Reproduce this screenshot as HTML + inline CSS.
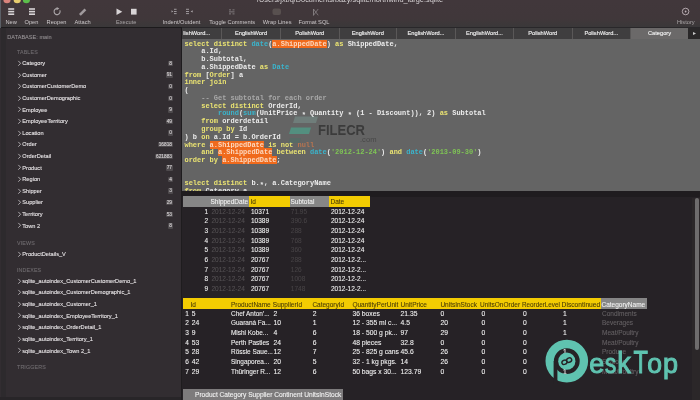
<!DOCTYPE html><html><head><meta charset="utf-8"><style>
*{margin:0;padding:0;box-sizing:border-box}
html,body{width:700px;height:400px;overflow:hidden;background:#262226;font-family:"Liberation Sans",sans-serif}
.a{position:absolute;white-space:nowrap}
#tb{left:0;top:0;width:700px;height:27px;background:linear-gradient(#41373b 0,#40373a 70%,#3a3839 100%)}
#tbb{left:0;top:26.6px;width:700px;height:1.2px;background:linear-gradient(90deg,#1c1a1c 0,#1c1a1c 182px,#29272a 182px)}
#sb{left:0;top:28px;width:182px;height:372px;background:#322d31}
#vb{left:181px;top:28px;width:1.4px;height:372px;background:#1e1c1e}
#tabs{left:182.3px;top:28px;width:517.7px;height:11px;background:#3f3e3f}
#ed{left:182.3px;top:39px;width:517.7px;height:152px;background:#646464;overflow:hidden}
#res{left:182.3px;top:191px;width:517.7px;height:209px;background:#262226;overflow:hidden}
.tl{font-size:5.7px;color:#cdc9cb;line-height:7px;text-align:center}
.si{font-size:5.65px;color:#e6e3e5;line-height:8px;-webkit-text-stroke:0.1px #e6e3e5}
.sh{font-size:5.3px;color:#6f6b6f;line-height:7px;letter-spacing:0.15px;-webkit-text-stroke:0.1px #6f6b6f}
.code{font-family:"Liberation Mono",monospace;font-weight:bold;font-size:6.97px;line-height:7.76px;color:#ececec;white-space:pre}
.k{color:#ebe472}
.f{color:#3ab4cc}
.s{color:#7fc455}
.c{color:#a8a8a8}
.h{background:#f06a1c;color:#fcd8bf}
.n{color:#b87450}
.tab{font-size:5.7px;color:#ececec;-webkit-text-stroke:0.15px #ececec;line-height:11px;text-align:center;top:0;height:11px;border-left:1px solid #5a5858}
.g{font-size:6.5px;line-height:9.7px;color:#f2f2f2}
</style></head><body><div id="W" style="position:absolute;left:0;top:0;width:700px;height:400px;will-change:transform">
<div class="a" id="tb"></div><div class="a" id="tbb"></div>
<svg class="a" style="left:0;top:0" width="700" height="27"><circle cx="7" cy="-0.3" r="3.6" fill="#d9837c"/><circle cx="17.2" cy="-0.3" r="3.6" fill="#e6cc6e"/><circle cx="26.4" cy="-0.3" r="3.6" fill="#5cbf4c"/><g fill="#d8d4d6"><rect x="8.2" y="8.2" width="6" height="1.6"/><rect x="8.2" y="10.8" width="6" height="1.6"/><rect x="8.2" y="13.4" width="6" height="1.6"/></g><g fill="#d8d4d6"><rect x="29" y="8.2" width="6" height="1.6"/><rect x="29" y="10.8" width="6" height="1.6"/><rect x="29" y="13.4" width="6" height="1.6"/></g><path d="M57 8.6 A3 3 0 1 0 59.8 10.3" fill="none" stroke="#a9a4a7" stroke-width="1.1"/><path d="M56.6 7 L59.4 8.6 L56.6 10.2 Z" fill="#a9a4a7"/><path d="M79 14 L84.5 8.5 L86.3 10.3 L80.8 15.8 Z" fill="#a09a9d"/><path d="M116.5 8.6 L122.3 11.8 L116.5 15 Z" fill="#d8d4d6"/><rect x="131" y="8.8" width="5.6" height="5.8" fill="#d8d4d6"/><g fill="#a9a4a7"><path d="M171.5 10.2 L173.3 11.4 L171.5 12.6Z"/><rect x="174" y="8.8" width="2.6" height="0.9"/><rect x="174" y="11" width="2.6" height="0.9"/><rect x="174" y="13.2" width="2.6" height="0.9"/><rect x="186" y="8.8" width="3" height="0.9"/><rect x="186" y="11" width="3" height="0.9"/><rect x="186" y="13.2" width="3" height="0.9"/><path d="M192.7 10.2 L190.6 11.4 L192.7 12.6Z"/></g><g fill="#8f8a8d"><rect x="229" y="9.5" width="2" height="0.8"/><rect x="232.5" y="9.5" width="2" height="0.8"/><rect x="229" y="11.5" width="5.5" height="0.8"/><rect x="229" y="13.5" width="2" height="0.8"/><rect x="232.5" y="13.5" width="2" height="0.8"/></g><rect x="272.5" y="8.5" width="8.5" height="6.5" rx="2" fill="#58504f" /><path d="M313.5 9 L318.2 15.3 M318.2 9 L313.5 15.3" stroke="#8f8a8d" stroke-width="0.7"/><rect x="313" y="9" width="0.8" height="6.5" fill="#8f8a8d"/><circle cx="685.6" cy="11.5" r="3.3" fill="none" stroke="#bfb3b9" stroke-width="0.9"/><circle cx="685.6" cy="11.5" r="0.9" fill="#bfb3b9"/></svg>
<div class="a" style="left:0;top:0;width:1px;height:400px;background:#5b5f66"></div>
<div class="a tl" style="left:11.2px;top:19px;width:80px;margin-left:-40px;">New</div>
<div class="a tl" style="left:31.5px;top:19px;width:80px;margin-left:-40px;">Open</div>
<div class="a tl" style="left:56.5px;top:19px;width:80px;margin-left:-40px;">Reopen</div>
<div class="a tl" style="left:82.6px;top:19px;width:80px;margin-left:-40px;">Attach</div>
<div class="a tl" style="left:126.2px;top:19px;width:80px;margin-left:-40px;color:#aaa6a8">Execute</div>
<div class="a tl" style="left:181.5px;top:19px;width:80px;margin-left:-40px;">Indent/Outdent</div>
<div class="a tl" style="left:232.2px;top:19px;width:80px;margin-left:-40px;">Toggle Comments</div>
<div class="a tl" style="left:277.2px;top:19px;width:80px;margin-left:-40px;">Wrap Lines</div>
<div class="a tl" style="left:314.0px;top:19px;width:80px;margin-left:-40px;">Format SQL</div>
<div class="a tl" style="left:685.8px;top:19px;width:80px;margin-left:-40px;color:#aaa6a8">History</div>
<div class="a" style="left:257px;top:-3.7px;font-size:7.35px;line-height:8px;color:#d8d4d6">/Users/jxbq/Documents/bazy/sqlite/northwind_large.sqlite</div>
<div class="a" id="sb"></div><div class="a" id="vb"></div>
<div class="a" style="left:1px;top:28px;width:5px;height:372px;background:#2d2a2d"></div>
<div class="a" style="left:0;top:397px;width:181px;height:3px;background:#282528"></div>
<div class="a sh" style="left:7.3px;top:33.6px;font-size:5.6px;letter-spacing:0;color:#a29ea0">DATABASE: main</div>
<div class="a sh" style="left:17px;top:49.2px">TABLES</div>
<svg class="a" style="left:17px;top:59.90px" width="5" height="7"><path d="M1.3 0.9 L3.6 3.3 L1.3 5.7" fill="none" stroke="#d6d2d4" stroke-width="0.75"/></svg>
<div class="a si" style="left:22.3px;top:59.20px">Category</div>
<div class="a" style="right:527px;top:60.70px;height:5.6px;padding:0 1px;background:#4e4a4d;border-radius:1px;font-size:4.8px;line-height:5.6px;color:#cdc9cb;-webkit-text-stroke:0.15px #cdc9cb">8</div>
<svg class="a" style="left:17px;top:71.50px" width="5" height="7"><path d="M1.3 0.9 L3.6 3.3 L1.3 5.7" fill="none" stroke="#d6d2d4" stroke-width="0.75"/></svg>
<div class="a si" style="left:22.3px;top:70.80px">Customer</div>
<div class="a" style="right:527px;top:72.30px;height:5.6px;padding:0 1px;background:#4e4a4d;border-radius:1px;font-size:4.8px;line-height:5.6px;color:#cdc9cb;-webkit-text-stroke:0.15px #cdc9cb">91</div>
<svg class="a" style="left:17px;top:83.10px" width="5" height="7"><path d="M1.3 0.9 L3.6 3.3 L1.3 5.7" fill="none" stroke="#d6d2d4" stroke-width="0.75"/></svg>
<div class="a si" style="left:22.3px;top:82.40px">CustomerCustomerDemo</div>
<div class="a" style="right:527px;top:83.90px;height:5.6px;padding:0 1px;background:#4e4a4d;border-radius:1px;font-size:4.8px;line-height:5.6px;color:#cdc9cb;-webkit-text-stroke:0.15px #cdc9cb">0</div>
<svg class="a" style="left:17px;top:94.70px" width="5" height="7"><path d="M1.3 0.9 L3.6 3.3 L1.3 5.7" fill="none" stroke="#d6d2d4" stroke-width="0.75"/></svg>
<div class="a si" style="left:22.3px;top:94.00px">CustomerDemographic</div>
<div class="a" style="right:527px;top:95.50px;height:5.6px;padding:0 1px;background:#4e4a4d;border-radius:1px;font-size:4.8px;line-height:5.6px;color:#cdc9cb;-webkit-text-stroke:0.15px #cdc9cb">0</div>
<svg class="a" style="left:17px;top:106.30px" width="5" height="7"><path d="M1.3 0.9 L3.6 3.3 L1.3 5.7" fill="none" stroke="#d6d2d4" stroke-width="0.75"/></svg>
<div class="a si" style="left:22.3px;top:105.60px">Employee</div>
<div class="a" style="right:527px;top:107.10px;height:5.6px;padding:0 1px;background:#4e4a4d;border-radius:1px;font-size:4.8px;line-height:5.6px;color:#cdc9cb;-webkit-text-stroke:0.15px #cdc9cb">9</div>
<svg class="a" style="left:17px;top:117.90px" width="5" height="7"><path d="M1.3 0.9 L3.6 3.3 L1.3 5.7" fill="none" stroke="#d6d2d4" stroke-width="0.75"/></svg>
<div class="a si" style="left:22.3px;top:117.20px">EmployeeTerritory</div>
<div class="a" style="right:527px;top:118.70px;height:5.6px;padding:0 1px;background:#4e4a4d;border-radius:1px;font-size:4.8px;line-height:5.6px;color:#cdc9cb;-webkit-text-stroke:0.15px #cdc9cb">49</div>
<svg class="a" style="left:17px;top:129.50px" width="5" height="7"><path d="M1.3 0.9 L3.6 3.3 L1.3 5.7" fill="none" stroke="#d6d2d4" stroke-width="0.75"/></svg>
<div class="a si" style="left:22.3px;top:128.80px">Location</div>
<div class="a" style="right:527px;top:130.30px;height:5.6px;padding:0 1px;background:#4e4a4d;border-radius:1px;font-size:4.8px;line-height:5.6px;color:#cdc9cb;-webkit-text-stroke:0.15px #cdc9cb">0</div>
<svg class="a" style="left:17px;top:141.10px" width="5" height="7"><path d="M1.3 0.9 L3.6 3.3 L1.3 5.7" fill="none" stroke="#d6d2d4" stroke-width="0.75"/></svg>
<div class="a si" style="left:22.3px;top:140.40px">Order</div>
<div class="a" style="right:527px;top:141.90px;height:5.6px;padding:0 1px;background:#4e4a4d;border-radius:1px;font-size:4.8px;line-height:5.6px;color:#cdc9cb;-webkit-text-stroke:0.15px #cdc9cb">16818</div>
<svg class="a" style="left:17px;top:152.70px" width="5" height="7"><path d="M1.3 0.9 L3.6 3.3 L1.3 5.7" fill="none" stroke="#d6d2d4" stroke-width="0.75"/></svg>
<div class="a si" style="left:22.3px;top:152.00px">OrderDetail</div>
<div class="a" style="right:527px;top:153.50px;height:5.6px;padding:0 1px;background:#4e4a4d;border-radius:1px;font-size:4.8px;line-height:5.6px;color:#cdc9cb;-webkit-text-stroke:0.15px #cdc9cb">621883</div>
<svg class="a" style="left:17px;top:164.30px" width="5" height="7"><path d="M1.3 0.9 L3.6 3.3 L1.3 5.7" fill="none" stroke="#d6d2d4" stroke-width="0.75"/></svg>
<div class="a si" style="left:22.3px;top:163.60px">Product</div>
<div class="a" style="right:527px;top:165.10px;height:5.6px;padding:0 1px;background:#4e4a4d;border-radius:1px;font-size:4.8px;line-height:5.6px;color:#cdc9cb;-webkit-text-stroke:0.15px #cdc9cb">77</div>
<svg class="a" style="left:17px;top:175.90px" width="5" height="7"><path d="M1.3 0.9 L3.6 3.3 L1.3 5.7" fill="none" stroke="#d6d2d4" stroke-width="0.75"/></svg>
<div class="a si" style="left:22.3px;top:175.20px">Region</div>
<div class="a" style="right:527px;top:176.70px;height:5.6px;padding:0 1px;background:#4e4a4d;border-radius:1px;font-size:4.8px;line-height:5.6px;color:#cdc9cb;-webkit-text-stroke:0.15px #cdc9cb">4</div>
<svg class="a" style="left:17px;top:187.50px" width="5" height="7"><path d="M1.3 0.9 L3.6 3.3 L1.3 5.7" fill="none" stroke="#d6d2d4" stroke-width="0.75"/></svg>
<div class="a si" style="left:22.3px;top:186.80px">Shipper</div>
<div class="a" style="right:527px;top:188.30px;height:5.6px;padding:0 1px;background:#4e4a4d;border-radius:1px;font-size:4.8px;line-height:5.6px;color:#cdc9cb;-webkit-text-stroke:0.15px #cdc9cb">3</div>
<svg class="a" style="left:17px;top:199.10px" width="5" height="7"><path d="M1.3 0.9 L3.6 3.3 L1.3 5.7" fill="none" stroke="#d6d2d4" stroke-width="0.75"/></svg>
<div class="a si" style="left:22.3px;top:198.40px">Supplier</div>
<div class="a" style="right:527px;top:199.90px;height:5.6px;padding:0 1px;background:#4e4a4d;border-radius:1px;font-size:4.8px;line-height:5.6px;color:#cdc9cb;-webkit-text-stroke:0.15px #cdc9cb">29</div>
<svg class="a" style="left:17px;top:210.70px" width="5" height="7"><path d="M1.3 0.9 L3.6 3.3 L1.3 5.7" fill="none" stroke="#d6d2d4" stroke-width="0.75"/></svg>
<div class="a si" style="left:22.3px;top:210.00px">Territory</div>
<div class="a" style="right:527px;top:211.50px;height:5.6px;padding:0 1px;background:#4e4a4d;border-radius:1px;font-size:4.8px;line-height:5.6px;color:#cdc9cb;-webkit-text-stroke:0.15px #cdc9cb">53</div>
<svg class="a" style="left:17px;top:222.30px" width="5" height="7"><path d="M1.3 0.9 L3.6 3.3 L1.3 5.7" fill="none" stroke="#d6d2d4" stroke-width="0.75"/></svg>
<div class="a si" style="left:22.3px;top:221.60px">Town 2</div>
<div class="a" style="right:527px;top:223.10px;height:5.6px;padding:0 1px;background:#4e4a4d;border-radius:1px;font-size:4.8px;line-height:5.6px;color:#cdc9cb;-webkit-text-stroke:0.15px #cdc9cb">8</div>
<div class="a sh" style="left:17px;top:239.5px">VIEWS</div>
<svg class="a" style="left:17px;top:250.50px" width="5" height="7"><path d="M1.3 0.9 L3.6 3.3 L1.3 5.7" fill="none" stroke="#d6d2d4" stroke-width="0.75"/></svg>
<div class="a si" style="left:22.3px;top:249.80px">ProductDetails_V</div>
<div class="a sh" style="left:17px;top:266.5px">INDEXES</div>
<svg class="a" style="left:17px;top:277.50px" width="5" height="7"><path d="M1.3 0.9 L3.6 3.3 L1.3 5.7" fill="none" stroke="#d6d2d4" stroke-width="0.75"/></svg>
<div class="a si" style="left:22.3px;top:276.80px">sqlite_autoindex_CustomerCustomerDemo_1</div>
<svg class="a" style="left:17px;top:289.12px" width="5" height="7"><path d="M1.3 0.9 L3.6 3.3 L1.3 5.7" fill="none" stroke="#d6d2d4" stroke-width="0.75"/></svg>
<div class="a si" style="left:22.3px;top:288.42px">sqlite_autoindex_CustomerDemographic_1</div>
<svg class="a" style="left:17px;top:300.74px" width="5" height="7"><path d="M1.3 0.9 L3.6 3.3 L1.3 5.7" fill="none" stroke="#d6d2d4" stroke-width="0.75"/></svg>
<div class="a si" style="left:22.3px;top:300.04px">sqlite_autoindex_Customer_1</div>
<svg class="a" style="left:17px;top:312.36px" width="5" height="7"><path d="M1.3 0.9 L3.6 3.3 L1.3 5.7" fill="none" stroke="#d6d2d4" stroke-width="0.75"/></svg>
<div class="a si" style="left:22.3px;top:311.66px">sqlite_autoindex_EmployeeTerritory_1</div>
<svg class="a" style="left:17px;top:323.98px" width="5" height="7"><path d="M1.3 0.9 L3.6 3.3 L1.3 5.7" fill="none" stroke="#d6d2d4" stroke-width="0.75"/></svg>
<div class="a si" style="left:22.3px;top:323.28px">sqlite_autoindex_OrderDetail_1</div>
<svg class="a" style="left:17px;top:335.60px" width="5" height="7"><path d="M1.3 0.9 L3.6 3.3 L1.3 5.7" fill="none" stroke="#d6d2d4" stroke-width="0.75"/></svg>
<div class="a si" style="left:22.3px;top:334.90px">sqlite_autoindex_Territory_1</div>
<svg class="a" style="left:17px;top:347.22px" width="5" height="7"><path d="M1.3 0.9 L3.6 3.3 L1.3 5.7" fill="none" stroke="#d6d2d4" stroke-width="0.75"/></svg>
<div class="a si" style="left:22.3px;top:346.52px">sqlite_autoindex_Town 2_1</div>
<div class="a sh" style="left:17px;top:364px">TRIGGERS</div>
<div class="a" id="tabs"></div>
<div class="a" id="ed"></div>
<div class="a tab" style="left:182.3px;top:28px;width:38.7px;border-left:none;text-align:left;"><span style="position:absolute;left:1px">lishWord...</span></div>
<div class="a tab" style="left:221.0px;top:28px;width:59.0px;">EnglishWord</div>
<div class="a tab" style="left:280.0px;top:28px;width:58.5px;">PolishWord</div>
<div class="a tab" style="left:338.5px;top:28px;width:57.5px;">EnglishWord</div>
<div class="a tab" style="left:396.0px;top:28px;width:59.0px;">EnglishWord...</div>
<div class="a tab" style="left:455.0px;top:28px;width:58.0px;">EnglishWord...</div>
<div class="a tab" style="left:513.0px;top:28px;width:58.5px;">PolishWord</div>
<div class="a tab" style="left:571.5px;top:28px;width:58.5px;">PolishWord...</div>
<div class="a tab" style="left:630.0px;top:28px;width:58.0px;background:#6b6969;">Category</div>
<div class="a" style="left:688px;top:28px;width:12px;height:11px;background:#2a2829;color:#c8c8c8;font-size:6px;line-height:11px;text-align:center">&#9656;</div>
<div class="a code" style="left:184.5px;top:40.6px"><span class="k">select</span> <span class="k">distinct</span> <span class="f">date</span>(<span class="h">a.ShippedDate</span>) <span class="k">as</span> ShippedDate,
    a.Id,
    b.Subtotal,
    a.ShippedDate <span class="k">as</span> <span class="f">Date</span>
<span class="k">from</span> [<span class="k">Order</span>] a
<span class="k">inner</span> <span class="k">join</span>
(
    <span class="c">-- Get subtotal for each order</span>
    <span class="k">select</span> <span class="k">distinct</span> OrderId,
        <span class="f">round</span>(<span class="f">sum</span>(UnitPrice <span style="position:relative;top:1.6px">*</span> Quantity <span style="position:relative;top:1.6px">*</span> (1 - Discount)), 2) <span class="k">as</span> Subtotal
    <span class="k">from</span> orderdetail
    <span class="k">group</span> <span class="k">by</span> Id
) b <span class="k">on</span> a.Id = b.OrderId
<span class="k">where</span> <span class="h">a.ShippedDate</span> <span class="k">is</span> <span class="k">not</span> <span class="n">null</span>
    <span class="k">and</span> <span class="h">a.ShippedDate</span> <span class="k">between</span> <span class="f">date</span>(<span class="s">'2012-12-24'</span>) <span class="k">and</span> <span class="f">date</span>(<span class="s">'2013-09-30'</span>)
<span class="k">order</span> <span class="k">by</span> <span class="h">a.ShippedDate</span>;


<span class="k">select</span> <span class="k">distinct</span> b.<span style="position:relative;top:1.6px">*</span>, a.CategoryName
<span class="k">from</span> Category a</div>
<svg class="a" style="left:183px;top:39px" width="517" height="152"><g transform="translate(-183,-39)"><path d="M295 116.5 L318 116.5 L316 123 L293 123 Z" fill="#7fa39a" opacity="0.4"/><path d="M291 127.5 L311 127.5 L309 134 L289 134 Z" fill="#4f9a86" opacity="0.8"/><path d="M290 138 L301 138 L299.5 143 L288.5 143 Z" fill="#4a6f66" opacity="0.5"/></g></svg>
<div class="a" style="left:317.5px;top:121px;font-weight:bold;font-size:14px;line-height:18px;color:#3b3b3b;transform:scaleX(0.93);transform-origin:0 0">FILECR</div>
<div class="a" style="left:360px;top:134.8px;font-size:7.6px;line-height:9px;color:#484848;">.com</div>
<div class="a" id="res"></div>
<div class="a" style="left:182.3px;top:191px;width:517.7px;height:6px;background:#1f1c1f"></div>
<div class="a" style="left:182.5px;top:196.2px;width:66.5px;height:10.7px;background:#868686"></div>
<div class="a" style="left:249px;top:196.2px;width:40.5px;height:10.7px;background:#f3cc02"></div>
<div class="a" style="left:289.5px;top:196.2px;width:39.5px;height:10.7px;background:#868686"></div>
<div class="a" style="left:329px;top:196.2px;width:41px;height:10.7px;background:#f3cc02"></div>
<div class="a" style="left:210.5px;top:197.40px;font-size:6.50px;line-height:10px;color:#f4f4f4;-webkit-text-stroke:0.08px #f4f4f4">ShippedDate</div>
<div class="a" style="left:250.5px;top:197.40px;font-size:6.50px;line-height:10px;color:#4a3c06;-webkit-text-stroke:0.08px #4a3c06">Id</div>
<div class="a" style="left:290.5px;top:197.40px;font-size:6.50px;line-height:10px;color:#f4f4f4;-webkit-text-stroke:0.08px #f4f4f4">Subtotal</div>
<div class="a" style="left:330.5px;top:197.40px;font-size:6.50px;line-height:10px;color:#4a3c06;-webkit-text-stroke:0.08px #4a3c06">Date</div>
<div class="a" style="right:492.0px;top:206.80px;font-size:6.50px;line-height:10px;color:#f0f0f0;-webkit-text-stroke:0.08px #f0f0f0">1</div>
<div class="a" style="left:211.5px;top:206.80px;font-size:6.50px;line-height:10px;color:#545053;-webkit-text-stroke:0.08px #545053">2012-12-24</div>
<div class="a" style="left:251.0px;top:206.80px;font-size:6.50px;line-height:10px;color:#f2f2f2;-webkit-text-stroke:0.08px #f2f2f2">10371</div>
<div class="a" style="left:290.8px;top:206.80px;font-size:6.50px;line-height:10px;color:#474346;-webkit-text-stroke:0.08px #474346">71.95</div>
<div class="a" style="left:331.0px;top:206.80px;font-size:6.50px;line-height:10px;color:#f2f2f2;-webkit-text-stroke:0.08px #f2f2f2">2012-12-24</div>
<div class="a" style="right:492.0px;top:216.45px;font-size:6.50px;line-height:10px;color:#f0f0f0;-webkit-text-stroke:0.08px #f0f0f0">2</div>
<div class="a" style="left:211.5px;top:216.45px;font-size:6.50px;line-height:10px;color:#545053;-webkit-text-stroke:0.08px #545053">2012-12-24</div>
<div class="a" style="left:251.0px;top:216.45px;font-size:6.50px;line-height:10px;color:#f2f2f2;-webkit-text-stroke:0.08px #f2f2f2">10389</div>
<div class="a" style="left:290.8px;top:216.45px;font-size:6.50px;line-height:10px;color:#474346;-webkit-text-stroke:0.08px #474346">390.6</div>
<div class="a" style="left:331.0px;top:216.45px;font-size:6.50px;line-height:10px;color:#f2f2f2;-webkit-text-stroke:0.08px #f2f2f2">2012-12-24</div>
<div class="a" style="right:492.0px;top:226.10px;font-size:6.50px;line-height:10px;color:#f0f0f0;-webkit-text-stroke:0.08px #f0f0f0">3</div>
<div class="a" style="left:211.5px;top:226.10px;font-size:6.50px;line-height:10px;color:#545053;-webkit-text-stroke:0.08px #545053">2012-12-24</div>
<div class="a" style="left:251.0px;top:226.10px;font-size:6.50px;line-height:10px;color:#f2f2f2;-webkit-text-stroke:0.08px #f2f2f2">10389</div>
<div class="a" style="left:290.8px;top:226.10px;font-size:6.50px;line-height:10px;color:#474346;-webkit-text-stroke:0.08px #474346">288</div>
<div class="a" style="left:331.0px;top:226.10px;font-size:6.50px;line-height:10px;color:#f2f2f2;-webkit-text-stroke:0.08px #f2f2f2">2012-12-24</div>
<div class="a" style="right:492.0px;top:235.75px;font-size:6.50px;line-height:10px;color:#f0f0f0;-webkit-text-stroke:0.08px #f0f0f0">4</div>
<div class="a" style="left:211.5px;top:235.75px;font-size:6.50px;line-height:10px;color:#545053;-webkit-text-stroke:0.08px #545053">2012-12-24</div>
<div class="a" style="left:251.0px;top:235.75px;font-size:6.50px;line-height:10px;color:#f2f2f2;-webkit-text-stroke:0.08px #f2f2f2">10389</div>
<div class="a" style="left:290.8px;top:235.75px;font-size:6.50px;line-height:10px;color:#474346;-webkit-text-stroke:0.08px #474346">768</div>
<div class="a" style="left:331.0px;top:235.75px;font-size:6.50px;line-height:10px;color:#f2f2f2;-webkit-text-stroke:0.08px #f2f2f2">2012-12-24</div>
<div class="a" style="right:492.0px;top:245.40px;font-size:6.50px;line-height:10px;color:#f0f0f0;-webkit-text-stroke:0.08px #f0f0f0">5</div>
<div class="a" style="left:211.5px;top:245.40px;font-size:6.50px;line-height:10px;color:#545053;-webkit-text-stroke:0.08px #545053">2012-12-24</div>
<div class="a" style="left:251.0px;top:245.40px;font-size:6.50px;line-height:10px;color:#f2f2f2;-webkit-text-stroke:0.08px #f2f2f2">10389</div>
<div class="a" style="left:290.8px;top:245.40px;font-size:6.50px;line-height:10px;color:#474346;-webkit-text-stroke:0.08px #474346">360</div>
<div class="a" style="left:331.0px;top:245.40px;font-size:6.50px;line-height:10px;color:#f2f2f2;-webkit-text-stroke:0.08px #f2f2f2">2012-12-24</div>
<div class="a" style="right:492.0px;top:255.05px;font-size:6.50px;line-height:10px;color:#f0f0f0;-webkit-text-stroke:0.08px #f0f0f0">6</div>
<div class="a" style="left:211.5px;top:255.05px;font-size:6.50px;line-height:10px;color:#545053;-webkit-text-stroke:0.08px #545053">2012-12-24</div>
<div class="a" style="left:251.0px;top:255.05px;font-size:6.50px;line-height:10px;color:#f2f2f2;-webkit-text-stroke:0.08px #f2f2f2">20767</div>
<div class="a" style="left:290.8px;top:255.05px;font-size:6.50px;line-height:10px;color:#474346;-webkit-text-stroke:0.08px #474346">288</div>
<div class="a" style="left:331.0px;top:255.05px;font-size:6.50px;line-height:10px;color:#f2f2f2;-webkit-text-stroke:0.08px #f2f2f2">2012-12-2...</div>
<div class="a" style="right:492.0px;top:264.70px;font-size:6.50px;line-height:10px;color:#f0f0f0;-webkit-text-stroke:0.08px #f0f0f0">7</div>
<div class="a" style="left:211.5px;top:264.70px;font-size:6.50px;line-height:10px;color:#545053;-webkit-text-stroke:0.08px #545053">2012-12-24</div>
<div class="a" style="left:251.0px;top:264.70px;font-size:6.50px;line-height:10px;color:#f2f2f2;-webkit-text-stroke:0.08px #f2f2f2">20767</div>
<div class="a" style="left:290.8px;top:264.70px;font-size:6.50px;line-height:10px;color:#474346;-webkit-text-stroke:0.08px #474346">126</div>
<div class="a" style="left:331.0px;top:264.70px;font-size:6.50px;line-height:10px;color:#f2f2f2;-webkit-text-stroke:0.08px #f2f2f2">2012-12-2...</div>
<div class="a" style="right:492.0px;top:274.35px;font-size:6.50px;line-height:10px;color:#f0f0f0;-webkit-text-stroke:0.08px #f0f0f0">8</div>
<div class="a" style="left:211.5px;top:274.35px;font-size:6.50px;line-height:10px;color:#545053;-webkit-text-stroke:0.08px #545053">2012-12-24</div>
<div class="a" style="left:251.0px;top:274.35px;font-size:6.50px;line-height:10px;color:#f2f2f2;-webkit-text-stroke:0.08px #f2f2f2">20767</div>
<div class="a" style="left:290.8px;top:274.35px;font-size:6.50px;line-height:10px;color:#474346;-webkit-text-stroke:0.08px #474346">1008</div>
<div class="a" style="left:331.0px;top:274.35px;font-size:6.50px;line-height:10px;color:#f2f2f2;-webkit-text-stroke:0.08px #f2f2f2">2012-12-2...</div>
<div class="a" style="right:492.0px;top:284.00px;font-size:6.50px;line-height:10px;color:#f0f0f0;-webkit-text-stroke:0.08px #f0f0f0">9</div>
<div class="a" style="left:211.5px;top:284.00px;font-size:6.50px;line-height:10px;color:#545053;-webkit-text-stroke:0.08px #545053">2012-12-24</div>
<div class="a" style="left:251.0px;top:284.00px;font-size:6.50px;line-height:10px;color:#f2f2f2;-webkit-text-stroke:0.08px #f2f2f2">20767</div>
<div class="a" style="left:290.8px;top:284.00px;font-size:6.50px;line-height:10px;color:#474346;-webkit-text-stroke:0.08px #474346">1748</div>
<div class="a" style="left:331.0px;top:284.00px;font-size:6.50px;line-height:10px;color:#f2f2f2;-webkit-text-stroke:0.08px #f2f2f2">2012-12-2...</div>
<div class="a" style="left:182.5px;top:298.2px;width:418.5px;height:10.9px;background:#f3cc02"></div>
<div class="a" style="left:601px;top:298.2px;width:45.5px;height:10.9px;background:#868686"></div>
<div class="a" style="left:190.5px;top:299.50px;font-size:6.50px;line-height:10px;color:#4a3c06;-webkit-text-stroke:0.08px #4a3c06">Id</div>
<div class="a" style="left:231.0px;top:299.50px;font-size:6.50px;line-height:10px;color:#4a3c06;-webkit-text-stroke:0.08px #4a3c06">ProductName</div>
<div class="a" style="left:272.8px;top:299.50px;font-size:6.50px;line-height:10px;color:#4a3c06;-webkit-text-stroke:0.08px #4a3c06">SupplierId</div>
<div class="a" style="left:312.4px;top:299.50px;font-size:6.50px;line-height:10px;color:#4a3c06;-webkit-text-stroke:0.08px #4a3c06">CategoryId</div>
<div class="a" style="left:352.4px;top:299.50px;font-size:6.50px;line-height:10px;color:#4a3c06;-webkit-text-stroke:0.08px #4a3c06">QuantityPerUnit</div>
<div class="a" style="left:400.6px;top:299.50px;font-size:6.50px;line-height:10px;color:#4a3c06;-webkit-text-stroke:0.08px #4a3c06">UnitPrice</div>
<div class="a" style="left:440.4px;top:299.50px;font-size:6.50px;line-height:10px;color:#4a3c06;-webkit-text-stroke:0.08px #4a3c06">UnitsInStock</div>
<div class="a" style="left:480.0px;top:299.50px;font-size:6.50px;line-height:10px;color:#4a3c06;-webkit-text-stroke:0.08px #4a3c06">UnitsOnOrder</div>
<div class="a" style="left:522.0px;top:299.50px;font-size:6.30px;line-height:10px;color:#4a3c06;-webkit-text-stroke:0.08px #4a3c06">ReorderLevel</div>
<div class="a" style="left:561.6px;top:299.50px;font-size:6.70px;line-height:10px;color:#4a3c06;-webkit-text-stroke:0.08px #4a3c06">Discontinued</div>
<div class="a" style="left:601.5px;top:299.50px;font-size:6.50px;line-height:10px;color:#f4f4f4;-webkit-text-stroke:0.08px #f4f4f4">CategoryName</div>
<div class="a" style="left:185.3px;top:308.60px;font-size:6.50px;line-height:10px;color:#f0f0f0;-webkit-text-stroke:0.08px #f0f0f0">1</div>
<div class="a" style="left:191.7px;top:308.60px;font-size:6.75px;line-height:10px;color:#f2f2f2;-webkit-text-stroke:0.08px #f2f2f2">5</div>
<div class="a" style="left:231.0px;top:308.60px;font-size:6.45px;line-height:10px;color:#f2f2f2;-webkit-text-stroke:0.08px #f2f2f2">Chef Anton’...</div>
<div class="a" style="left:273.4px;top:308.60px;font-size:6.75px;line-height:10px;color:#f2f2f2;-webkit-text-stroke:0.08px #f2f2f2">2</div>
<div class="a" style="left:312.7px;top:308.60px;font-size:6.75px;line-height:10px;color:#f2f2f2;-webkit-text-stroke:0.08px #f2f2f2">2</div>
<div class="a" style="left:352.4px;top:308.60px;font-size:6.75px;line-height:10px;color:#f2f2f2;-webkit-text-stroke:0.08px #f2f2f2">36 boxes</div>
<div class="a" style="left:400.6px;top:308.60px;font-size:6.75px;line-height:10px;color:#f2f2f2;-webkit-text-stroke:0.08px #f2f2f2">21.35</div>
<div class="a" style="left:440.6px;top:308.60px;font-size:6.75px;line-height:10px;color:#f2f2f2;-webkit-text-stroke:0.08px #f2f2f2">0</div>
<div class="a" style="left:481.6px;top:308.60px;font-size:6.75px;line-height:10px;color:#f2f2f2;-webkit-text-stroke:0.08px #f2f2f2">0</div>
<div class="a" style="left:523.0px;top:308.60px;font-size:6.75px;line-height:10px;color:#f2f2f2;-webkit-text-stroke:0.08px #f2f2f2">0</div>
<div class="a" style="left:563.0px;top:308.60px;font-size:6.75px;line-height:10px;color:#f2f2f2;-webkit-text-stroke:0.08px #f2f2f2">1</div>
<div class="a" style="left:602.0px;top:308.60px;font-size:6.50px;line-height:10px;color:#656164;-webkit-text-stroke:0.08px #656164">Condiments</div>
<div class="a" style="left:185.3px;top:318.30px;font-size:6.50px;line-height:10px;color:#f0f0f0;-webkit-text-stroke:0.08px #f0f0f0">2</div>
<div class="a" style="left:191.7px;top:318.30px;font-size:6.75px;line-height:10px;color:#f2f2f2;-webkit-text-stroke:0.08px #f2f2f2">24</div>
<div class="a" style="left:231.0px;top:318.30px;font-size:6.45px;line-height:10px;color:#f2f2f2;-webkit-text-stroke:0.08px #f2f2f2">Guaraná Fa...</div>
<div class="a" style="left:273.4px;top:318.30px;font-size:6.75px;line-height:10px;color:#f2f2f2;-webkit-text-stroke:0.08px #f2f2f2">10</div>
<div class="a" style="left:312.7px;top:318.30px;font-size:6.75px;line-height:10px;color:#f2f2f2;-webkit-text-stroke:0.08px #f2f2f2">1</div>
<div class="a" style="left:352.4px;top:318.30px;font-size:6.75px;line-height:10px;color:#f2f2f2;-webkit-text-stroke:0.08px #f2f2f2">12 - 355 ml c...</div>
<div class="a" style="left:400.6px;top:318.30px;font-size:6.75px;line-height:10px;color:#f2f2f2;-webkit-text-stroke:0.08px #f2f2f2">4.5</div>
<div class="a" style="left:440.6px;top:318.30px;font-size:6.75px;line-height:10px;color:#f2f2f2;-webkit-text-stroke:0.08px #f2f2f2">20</div>
<div class="a" style="left:481.6px;top:318.30px;font-size:6.75px;line-height:10px;color:#f2f2f2;-webkit-text-stroke:0.08px #f2f2f2">0</div>
<div class="a" style="left:523.0px;top:318.30px;font-size:6.75px;line-height:10px;color:#f2f2f2;-webkit-text-stroke:0.08px #f2f2f2">0</div>
<div class="a" style="left:563.0px;top:318.30px;font-size:6.75px;line-height:10px;color:#f2f2f2;-webkit-text-stroke:0.08px #f2f2f2">1</div>
<div class="a" style="left:602.0px;top:318.30px;font-size:6.50px;line-height:10px;color:#656164;-webkit-text-stroke:0.08px #656164">Beverages</div>
<div class="a" style="left:185.3px;top:328.00px;font-size:6.50px;line-height:10px;color:#f0f0f0;-webkit-text-stroke:0.08px #f0f0f0">3</div>
<div class="a" style="left:191.7px;top:328.00px;font-size:6.75px;line-height:10px;color:#f2f2f2;-webkit-text-stroke:0.08px #f2f2f2">9</div>
<div class="a" style="left:231.0px;top:328.00px;font-size:6.45px;line-height:10px;color:#f2f2f2;-webkit-text-stroke:0.08px #f2f2f2">Mishi Kobe...</div>
<div class="a" style="left:273.4px;top:328.00px;font-size:6.75px;line-height:10px;color:#f2f2f2;-webkit-text-stroke:0.08px #f2f2f2">4</div>
<div class="a" style="left:312.7px;top:328.00px;font-size:6.75px;line-height:10px;color:#f2f2f2;-webkit-text-stroke:0.08px #f2f2f2">6</div>
<div class="a" style="left:352.4px;top:328.00px;font-size:6.75px;line-height:10px;color:#f2f2f2;-webkit-text-stroke:0.08px #f2f2f2">18 - 500 g pk...</div>
<div class="a" style="left:400.6px;top:328.00px;font-size:6.75px;line-height:10px;color:#f2f2f2;-webkit-text-stroke:0.08px #f2f2f2">97</div>
<div class="a" style="left:440.6px;top:328.00px;font-size:6.75px;line-height:10px;color:#f2f2f2;-webkit-text-stroke:0.08px #f2f2f2">29</div>
<div class="a" style="left:481.6px;top:328.00px;font-size:6.75px;line-height:10px;color:#f2f2f2;-webkit-text-stroke:0.08px #f2f2f2">0</div>
<div class="a" style="left:523.0px;top:328.00px;font-size:6.75px;line-height:10px;color:#f2f2f2;-webkit-text-stroke:0.08px #f2f2f2">0</div>
<div class="a" style="left:563.0px;top:328.00px;font-size:6.75px;line-height:10px;color:#f2f2f2;-webkit-text-stroke:0.08px #f2f2f2">1</div>
<div class="a" style="left:602.0px;top:328.00px;font-size:6.50px;line-height:10px;color:#656164;-webkit-text-stroke:0.08px #656164">Meat/Poultry</div>
<div class="a" style="left:185.3px;top:337.70px;font-size:6.50px;line-height:10px;color:#f0f0f0;-webkit-text-stroke:0.08px #f0f0f0">4</div>
<div class="a" style="left:191.7px;top:337.70px;font-size:6.75px;line-height:10px;color:#f2f2f2;-webkit-text-stroke:0.08px #f2f2f2">53</div>
<div class="a" style="left:231.0px;top:337.70px;font-size:6.45px;line-height:10px;color:#f2f2f2;-webkit-text-stroke:0.08px #f2f2f2">Perth Pasties</div>
<div class="a" style="left:273.4px;top:337.70px;font-size:6.75px;line-height:10px;color:#f2f2f2;-webkit-text-stroke:0.08px #f2f2f2">24</div>
<div class="a" style="left:312.7px;top:337.70px;font-size:6.75px;line-height:10px;color:#f2f2f2;-webkit-text-stroke:0.08px #f2f2f2">6</div>
<div class="a" style="left:352.4px;top:337.70px;font-size:6.75px;line-height:10px;color:#f2f2f2;-webkit-text-stroke:0.08px #f2f2f2">48 pieces</div>
<div class="a" style="left:400.6px;top:337.70px;font-size:6.75px;line-height:10px;color:#f2f2f2;-webkit-text-stroke:0.08px #f2f2f2">32.8</div>
<div class="a" style="left:440.6px;top:337.70px;font-size:6.75px;line-height:10px;color:#f2f2f2;-webkit-text-stroke:0.08px #f2f2f2">0</div>
<div class="a" style="left:481.6px;top:337.70px;font-size:6.75px;line-height:10px;color:#f2f2f2;-webkit-text-stroke:0.08px #f2f2f2">0</div>
<div class="a" style="left:523.0px;top:337.70px;font-size:6.75px;line-height:10px;color:#f2f2f2;-webkit-text-stroke:0.08px #f2f2f2">0</div>
<div class="a" style="left:563.0px;top:337.70px;font-size:6.75px;line-height:10px;color:#f2f2f2;-webkit-text-stroke:0.08px #f2f2f2">1</div>
<div class="a" style="left:602.0px;top:337.70px;font-size:6.50px;line-height:10px;color:#656164;-webkit-text-stroke:0.08px #656164">Meat/Poultry</div>
<div class="a" style="left:185.3px;top:347.40px;font-size:6.50px;line-height:10px;color:#f0f0f0;-webkit-text-stroke:0.08px #f0f0f0">5</div>
<div class="a" style="left:191.7px;top:347.40px;font-size:6.75px;line-height:10px;color:#f2f2f2;-webkit-text-stroke:0.08px #f2f2f2">28</div>
<div class="a" style="left:231.0px;top:347.40px;font-size:6.45px;line-height:10px;color:#f2f2f2;-webkit-text-stroke:0.08px #f2f2f2">Rössle Saue...</div>
<div class="a" style="left:273.4px;top:347.40px;font-size:6.75px;line-height:10px;color:#f2f2f2;-webkit-text-stroke:0.08px #f2f2f2">12</div>
<div class="a" style="left:312.7px;top:347.40px;font-size:6.75px;line-height:10px;color:#f2f2f2;-webkit-text-stroke:0.08px #f2f2f2">7</div>
<div class="a" style="left:352.4px;top:347.40px;font-size:6.75px;line-height:10px;color:#f2f2f2;-webkit-text-stroke:0.08px #f2f2f2">25 - 825 g cans</div>
<div class="a" style="left:400.6px;top:347.40px;font-size:6.75px;line-height:10px;color:#f2f2f2;-webkit-text-stroke:0.08px #f2f2f2">45.6</div>
<div class="a" style="left:440.6px;top:347.40px;font-size:6.75px;line-height:10px;color:#f2f2f2;-webkit-text-stroke:0.08px #f2f2f2">26</div>
<div class="a" style="left:481.6px;top:347.40px;font-size:6.75px;line-height:10px;color:#f2f2f2;-webkit-text-stroke:0.08px #f2f2f2">0</div>
<div class="a" style="left:523.0px;top:347.40px;font-size:6.75px;line-height:10px;color:#f2f2f2;-webkit-text-stroke:0.08px #f2f2f2">0</div>
<div class="a" style="left:563.0px;top:347.40px;font-size:6.75px;line-height:10px;color:#f2f2f2;-webkit-text-stroke:0.08px #f2f2f2">1</div>
<div class="a" style="left:602.0px;top:347.40px;font-size:6.50px;line-height:10px;color:#656164;-webkit-text-stroke:0.08px #656164">Produce</div>
<div class="a" style="left:185.3px;top:357.10px;font-size:6.50px;line-height:10px;color:#f0f0f0;-webkit-text-stroke:0.08px #f0f0f0">6</div>
<div class="a" style="left:191.7px;top:357.10px;font-size:6.75px;line-height:10px;color:#f2f2f2;-webkit-text-stroke:0.08px #f2f2f2">42</div>
<div class="a" style="left:231.0px;top:357.10px;font-size:6.45px;line-height:10px;color:#f2f2f2;-webkit-text-stroke:0.08px #f2f2f2">Singaporea...</div>
<div class="a" style="left:273.4px;top:357.10px;font-size:6.75px;line-height:10px;color:#f2f2f2;-webkit-text-stroke:0.08px #f2f2f2">20</div>
<div class="a" style="left:312.7px;top:357.10px;font-size:6.75px;line-height:10px;color:#f2f2f2;-webkit-text-stroke:0.08px #f2f2f2">5</div>
<div class="a" style="left:352.4px;top:357.10px;font-size:6.75px;line-height:10px;color:#f2f2f2;-webkit-text-stroke:0.08px #f2f2f2">32 - 1 kg pkgs.</div>
<div class="a" style="left:400.6px;top:357.10px;font-size:6.75px;line-height:10px;color:#f2f2f2;-webkit-text-stroke:0.08px #f2f2f2">14</div>
<div class="a" style="left:440.6px;top:357.10px;font-size:6.75px;line-height:10px;color:#f2f2f2;-webkit-text-stroke:0.08px #f2f2f2">26</div>
<div class="a" style="left:481.6px;top:357.10px;font-size:6.75px;line-height:10px;color:#f2f2f2;-webkit-text-stroke:0.08px #f2f2f2">0</div>
<div class="a" style="left:523.0px;top:357.10px;font-size:6.75px;line-height:10px;color:#f2f2f2;-webkit-text-stroke:0.08px #f2f2f2">0</div>
<div class="a" style="left:563.0px;top:357.10px;font-size:6.75px;line-height:10px;color:#f2f2f2;-webkit-text-stroke:0.08px #f2f2f2">1</div>
<div class="a" style="left:602.0px;top:357.10px;font-size:6.50px;line-height:10px;color:#656164;-webkit-text-stroke:0.08px #656164">Seafood</div>
<div class="a" style="left:185.3px;top:366.80px;font-size:6.50px;line-height:10px;color:#f0f0f0;-webkit-text-stroke:0.08px #f0f0f0">7</div>
<div class="a" style="left:191.7px;top:366.80px;font-size:6.75px;line-height:10px;color:#f2f2f2;-webkit-text-stroke:0.08px #f2f2f2">29</div>
<div class="a" style="left:231.0px;top:366.80px;font-size:6.45px;line-height:10px;color:#f2f2f2;-webkit-text-stroke:0.08px #f2f2f2">Thüringer R...</div>
<div class="a" style="left:273.4px;top:366.80px;font-size:6.75px;line-height:10px;color:#f2f2f2;-webkit-text-stroke:0.08px #f2f2f2">12</div>
<div class="a" style="left:312.7px;top:366.80px;font-size:6.75px;line-height:10px;color:#f2f2f2;-webkit-text-stroke:0.08px #f2f2f2">6</div>
<div class="a" style="left:352.4px;top:366.80px;font-size:6.75px;line-height:10px;color:#f2f2f2;-webkit-text-stroke:0.08px #f2f2f2">50 bags x 30...</div>
<div class="a" style="left:400.6px;top:366.80px;font-size:6.75px;line-height:10px;color:#f2f2f2;-webkit-text-stroke:0.08px #f2f2f2">123.79</div>
<div class="a" style="left:440.6px;top:366.80px;font-size:6.75px;line-height:10px;color:#f2f2f2;-webkit-text-stroke:0.08px #f2f2f2">0</div>
<div class="a" style="left:481.6px;top:366.80px;font-size:6.75px;line-height:10px;color:#f2f2f2;-webkit-text-stroke:0.08px #f2f2f2">0</div>
<div class="a" style="left:523.0px;top:366.80px;font-size:6.75px;line-height:10px;color:#f2f2f2;-webkit-text-stroke:0.08px #f2f2f2">0</div>
<div class="a" style="left:563.0px;top:366.80px;font-size:6.75px;line-height:10px;color:#f2f2f2;-webkit-text-stroke:0.08px #f2f2f2">1</div>
<div class="a" style="left:602.0px;top:366.80px;font-size:6.50px;line-height:10px;color:#656164;-webkit-text-stroke:0.08px #656164">Meat/Poultry</div>
<div class="a" style="left:182.5px;top:389px;width:160px;height:11px;background:#7d7b7c"></div>
<div class="a" style="left:195.0px;top:389.50px;font-size:6.60px;line-height:10px;color:#f6f6f6;-webkit-text-stroke:0.08px #f6f6f6">Product Category Supplier Continent UnitsInStock</div>
<svg class="a" style="left:540px;top:335px" width="60" height="55"><g transform="translate(-540,-335)"><circle cx="566.8" cy="361.1" r="17.1" fill="none" stroke="#5fc3b0" stroke-width="8.4"/><circle cx="566.8" cy="361.2" r="8.6" fill="#5fc3b0"/><rect x="553.6" y="361" width="3.8" height="23" fill="#262226"/><g fill="none" stroke="#262226" stroke-width="1.4" transform="rotate(-25 566.8 361.2)"><ellipse cx="564.2" cy="361.2" rx="2.6" ry="2.1"/><ellipse cx="569.4" cy="361.2" rx="2.6" ry="2.1"/></g></g></svg>
<svg class="a" style="left:0;top:0" width="700" height="400"><g fill="#5fc3b0" stroke="#5fc3b0" stroke-width="1" font-family="Liberation Sans" ><text transform="translate(589.37,373.2) scale(0.995,1)" font-size="27">e</text><text transform="translate(604.88,373.2) scale(0.826,1)" font-size="27">s</text><text transform="translate(617.27,373.2) scale(0.940,1)" font-size="29">k</text><text transform="translate(633.58,373.2) scale(0.736,1)" font-size="32">T</text><text transform="translate(647.29,373.2) scale(0.983,1)" font-size="27">o</text><text transform="translate(663.04,373.2) scale(1.000,1)" font-size="27">p</text></g></svg>
<div class="a" style="left:692px;top:198px;width:8px;height:202px;background:#2b2729"></div>
<div class="a" style="left:694.5px;top:198px;width:4px;height:152px;background:#6e6c6d;border-radius:2px"></div>
</div></body></html>
